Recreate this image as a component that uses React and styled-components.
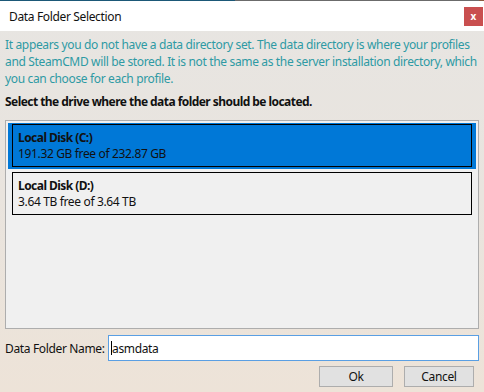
import React from "react";
import styled, { createGlobalStyle } from "styled-components";

const Global = createGlobalStyle`
  html, body { margin: 0; padding: 0; }
  body { font-family: "Noto Sans", "Open Sans", sans-serif; font-size: 12px; letter-spacing: -0.35px; }
`;

const Window = styled.div`
  width: 484px;
  height: 392px;
  display: flex;
  flex-direction: column;
  background: linear-gradient(#e7e5e2 0%, #e9e4de 50%, #ede3d8 100%);
  overflow: hidden;
`;

const TopLine = styled.div`
  height: 1px;
  background: linear-gradient(to right, #1b5877 0%, #1b5877 48.5%, #6b6b6b 48.5%, #6b6b6b 99%, #8a5a40 99%);
`;

const TitleBar = styled.div`
  height: 30px;
  background: #ffffff;
  display: flex;
  align-items: center;
  justify-content: space-between;
  padding: 0 1px 0 9px;
  color: #111;
  font-size: 12px;
`;

const CloseButton = styled.div`
  width: 19px;
  height: 19px;
  background: #c94f4f;
  color: #fff;
  font-weight: bold;
  font-size: 10px;
  display: flex;
  align-items: center;
  justify-content: center;
  line-height: 1;
  padding-bottom: 1px;
  box-sizing: border-box;
  letter-spacing: 0;
`;

const Content = styled.div`
  flex: 1;
  display: flex;
  flex-direction: column;
  padding: 5px;
  min-height: 0;
`;

const Intro = styled.p`
  margin: 0;
  color: #2e9aa4;
  line-height: 17px;
  white-space: nowrap;
`;

const Prompt = styled.div`
  margin-top: 7px;
  font-weight: bold;
  color: #111;
  line-height: 16px;
  letter-spacing: -0.55px;
`;

const DriveList = styled.div`
  margin-top: 10px;
  flex: 1;
  border: 1px solid #adadad;
  background: #f0f0f0;
  display: flex;
  flex-direction: column;
`;

const DriveItem = styled.div`
  margin: 2px 2px 0 2px;
  padding: 1px 4px 2px 4px;
  background: ${(p) => (p.$selected ? "#0078d7" : "transparent")};
`;

const DriveCard = styled.div`
  border: 1px solid #000;
  padding: 5px 5px 4px 5px;
  color: #111;
  line-height: 16px;
`;

const DriveName = styled.div`
  font-weight: bold;
  letter-spacing: -0.55px;
`;

const InputRow = styled.div`
  margin-top: 6px;
  display: flex;
  align-items: center;
`;

const Label = styled.label`
  width: 103px;
  color: #111;
  white-space: nowrap;
`;

const TextInput = styled.div`
  flex: 1;
  height: 26px;
  box-sizing: border-box;
  border: 1px solid #5a9fe3;
  background: #fff;
  display: flex;
  align-items: center;
  padding-left: 2px;
  color: #111;
`;

const Caret = styled.span`
  display: inline-block;
  width: 1px;
  height: 14px;
  background: #000;
`;

const ButtonRow = styled.div`
  margin-top: 5px;
  display: flex;
  justify-content: flex-end;
  gap: 11px;
  padding-right: 5px;
`;

const Button = styled.div`
  width: ${(p) => p.$w}px;
  height: 21px;
  box-sizing: border-box;
  border: 1px solid #adadad;
  background: #e1e1e1;
  display: flex;
  align-items: center;
  justify-content: center;
  color: #111;
`;

const drives = [
  { name: "Local Disk (C:)", info: "191.32 GB free of 232.87 GB", selected: true },
  { name: "Local Disk (D:)", info: "3.64 TB free of 3.64 TB", selected: false },
];

export default function App() {
  return (
    <>
      <Global />
      <Window>
        <TopLine />
        <TitleBar>
          <span>Data Folder Selection</span>
          <CloseButton>x</CloseButton>
        </TitleBar>
        <Content>
          <Intro>
            It appears you do not have a data directory set. The data directory is where your profiles
            <br />
            and SteamCMD will be stored. It is not the same as the server installation directory, which
            <br />
            you can choose for each profile.
          </Intro>
          <Prompt>Select the drive where the data folder should be located.</Prompt>
          <DriveList>
            {drives.map((d) => (
              <DriveItem key={d.name} $selected={d.selected}>
                <DriveCard>
                  <DriveName>{d.name}</DriveName>
                  <div>{d.info}</div>
                </DriveCard>
              </DriveItem>
            ))}
          </DriveList>
          <InputRow>
            <Label>Data Folder Name:</Label>
            <TextInput>
              <Caret />
              <span>asmdata</span>
            </TextInput>
          </InputRow>
          <ButtonRow>
            <Button $w={74}>Ok</Button>
            <Button $w={70}>Cancel</Button>
          </ButtonRow>
        </Content>
      </Window>
    </>
  );
}
